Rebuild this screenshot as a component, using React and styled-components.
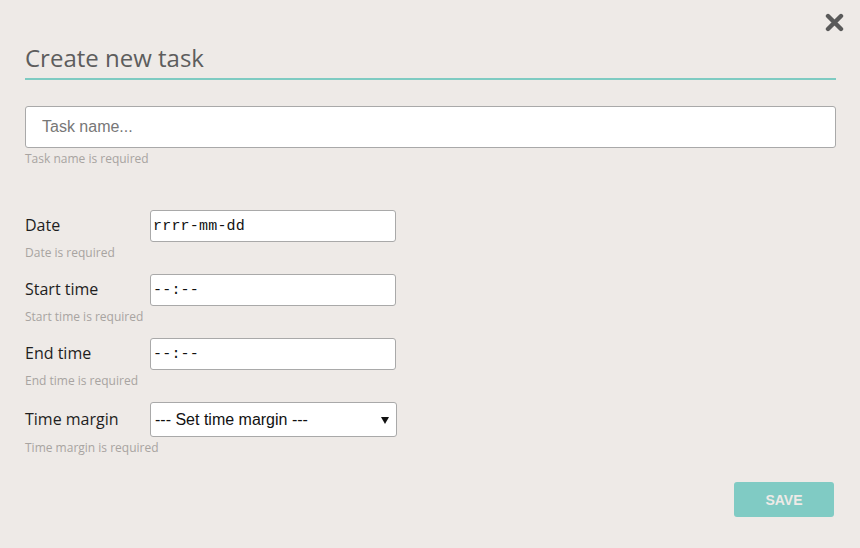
import React from 'react';
import styled, { createGlobalStyle } from 'styled-components';

const GlobalStyle = createGlobalStyle`
  html, body {
    margin: 0;
    padding: 0;
    background: #eeeae7;
  }
`;

const Page = styled.div`
  position: relative;
  box-sizing: border-box;
  min-height: 548px;
  padding: 42px 24px 0 25px;
  background: #eeeae7;
  font-family: 'Open Sans', sans-serif;
`;

const CloseButton = styled.button`
  position: absolute;
  top: 13px;
  right: 16px;
  width: 19px;
  height: 19px;
  padding: 0;
  border: none;
  background: transparent;
  cursor: pointer;
  svg { display: block; }
`;

const Title = styled.h2`
  margin: 0;
  height: 32px;
  line-height: 32px;
  padding-bottom: 4px;
  border-bottom: 2px solid #7ecbc2;
  font-size: 24px;
  font-weight: 500;
  color: #5d5d5d;
`;

const NameInput = styled.input`
  display: block;
  box-sizing: border-box;
  width: 100%;
  height: 42px;
  margin-top: 26px;
  padding: 0 16px;
  border: 1px solid #a9a9a9;
  border-radius: 3px;
  background: #fff;
  font-family: 'Liberation Sans', Arial, sans-serif;
  font-size: 16px;
  color: #333;
  outline: none;
  &::placeholder { color: #777; }
`;

const Hint = styled.div`
  margin-top: 3px;
  height: 16px;
  line-height: 16px;
  font-size: 12px;
  color: #a8a4a1;
`;

const Fields = styled.div`
  display: flex;
  flex-direction: column;
  gap: 13px;
  margin-top: 43px;
`;

const Field = styled.div``;

const Row = styled.div`
  display: flex;
  align-items: center;
`;

const Label = styled.label`
  width: 125px;
  margin-top: -2px;
  font-size: 16px;
  color: #1e1e1e;
`;

const Box = styled.input`
  box-sizing: border-box;
  width: 246px;
  height: 32px;
  padding: 0 2px;
  border: 1px solid #a9a9a9;
  border-radius: 3px;
  background: #fff;
  font-family: 'Liberation Mono', monospace;
  font-size: 15px;
  letter-spacing: 0.2px;
  color: #111;
  outline: none;
`;

const SelectWrap = styled.div`
  position: relative;
  width: 247px;
  &::after {
    content: '';
    position: absolute;
    right: 8px;
    top: 15px;
    border-left: 4px solid transparent;
    border-right: 4px solid transparent;
    border-top: 7px solid #111;
    pointer-events: none;
  }
`;

const Select = styled.select`
  appearance: none;
  box-sizing: border-box;
  width: 100%;
  height: 35px;
  padding: 0 20px 0 4px;
  border: 1px solid #a9a9a9;
  border-radius: 3px;
  background: #fff;
  font-family: 'Liberation Sans', Arial, sans-serif;
  font-size: 16px;
  color: #111;
  outline: none;
`;

const Footer = styled.div`
  display: flex;
  justify-content: flex-end;
  margin-top: 26px;
  padding-right: 2px;
`;

const SaveButton = styled.button`
  width: 100px;
  height: 35px;
  border: none;
  border-radius: 3px;
  background: #80cbc4;
  font-family: 'Liberation Sans', Arial, sans-serif;
  font-size: 14px;
  font-weight: 700;
  color: #eeeae7;
  cursor: pointer;
`;

const fields = [
  { id: 'date', label: 'Date', value: 'rrrr-mm-dd', hint: 'Date is required' },
  { id: 'start', label: 'Start time', value: '--:--', hint: 'Start time is required' },
  { id: 'end', label: 'End time', value: '--:--', hint: 'End time is required' },
];

export default function App() {
  return (
    <>
      <GlobalStyle />
      <Page>
        <CloseButton aria-label="Close">
          <svg width="19" height="19" viewBox="0 0 19 19">
            <path d="M3 3 L16 16 M16 3 L3 16" stroke="#5a5a5a" strokeWidth="4.4" strokeLinecap="round" />
          </svg>
        </CloseButton>
        <Title>Create new task</Title>
        <NameInput placeholder="Task name..." />
        <Hint>Task name is required</Hint>
        <Fields>
          {fields.map(f => (
            <Field key={f.id}>
              <Row>
                <Label htmlFor={f.id}>{f.label}</Label>
                <Box id={f.id} readOnly defaultValue={f.value} />
              </Row>
              <Hint>{f.hint}</Hint>
            </Field>
          ))}
          <Field>
            <Row>
              <Label htmlFor="margin">Time margin</Label>
              <SelectWrap>
                <Select id="margin" defaultValue="">
                  <option value="">--- Set time margin ---</option>
                  <option value="5">5 minutes</option>
                  <option value="10">10 minutes</option>
                  <option value="15">15 minutes</option>
                </Select>
              </SelectWrap>
            </Row>
            <Hint>Time margin is required</Hint>
          </Field>
        </Fields>
        <Footer>
          <SaveButton>SAVE</SaveButton>
        </Footer>
      </Page>
    </>
  );
}
